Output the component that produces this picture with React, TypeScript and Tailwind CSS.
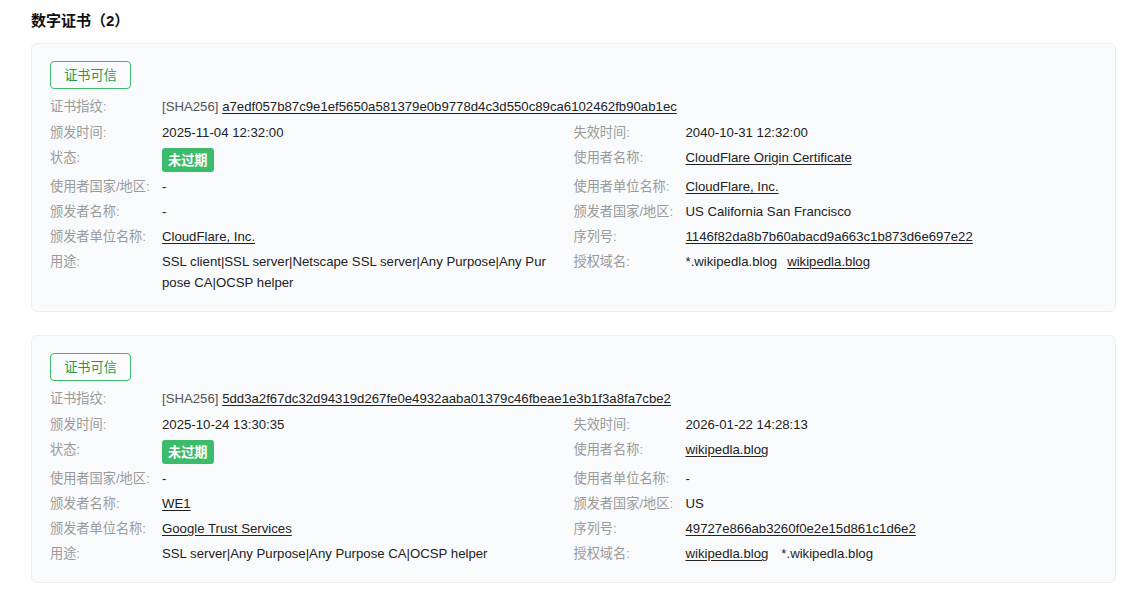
type Cell = { label: string; value: React.ReactNode };

interface Cert {
  fingerprint: string;
  left: Cell[];
  right: Cell[];
}

function Link({ children }: { children: React.ReactNode }) {
  return <span className="underline underline-offset-2 text-[#222]">{children}</span>;
}

function Expired() {
  return (
    <span className="mt-[1px] inline-flex h-[24px] items-center rounded-[3px] bg-[#3dbb6c] px-[6px] font-bold text-white">
      未过期
    </span>
  );
}

const certs: Cert[] = [
  {
    fingerprint: "a7edf057b87c9e1ef5650a581379e0b9778d4c3d550c89ca6102462fb90ab1ec",
    left: [
      { label: "颁发时间:", value: "2025-11-04 12:32:00" },
      { label: "状态:", value: <Expired /> },
      { label: "使用者国家/地区:", value: "-" },
      { label: "颁发者名称:", value: "-" },
      { label: "颁发者单位名称:", value: <Link>CloudFlare, Inc.</Link> },
      {
        label: "用途:",
        value: "SSL client|SSL server|Netscape SSL server|Any Purpose|Any Purpose CA|OCSP helper",
      },
    ],
    right: [
      { label: "失效时间:", value: "2040-10-31 12:32:00" },
      { label: "使用者名称:", value: <Link>CloudFlare Origin Certificate</Link> },
      { label: "使用者单位名称:", value: <Link>CloudFlare, Inc.</Link> },
      { label: "颁发者国家/地区:", value: "US California San Francisco" },
      { label: "序列号:", value: <Link>1146f82da8b7b60abacd9a663c1b873d6e697e22</Link> },
      {
        label: "授权域名:",
        value: (
          <span className="flex gap-[10px]">
            <span>*.wikipedla.blog</span>
            <Link>wikipedla.blog</Link>
          </span>
        ),
      },
    ],
  },
  {
    fingerprint: "5dd3a2f67dc32d94319d267fe0e4932aaba01379c46fbeae1e3b1f3a8fa7cbe2",
    left: [
      { label: "颁发时间:", value: "2025-10-24 13:30:35" },
      { label: "状态:", value: <Expired /> },
      { label: "使用者国家/地区:", value: "-" },
      { label: "颁发者名称:", value: <Link>WE1</Link> },
      { label: "颁发者单位名称:", value: <Link>Google Trust Services</Link> },
      { label: "用途:", value: "SSL server|Any Purpose|Any Purpose CA|OCSP helper" },
    ],
    right: [
      { label: "失效时间:", value: "2026-01-22 14:28:13" },
      { label: "使用者名称:", value: <Link>wikipedla.blog</Link> },
      { label: "使用者单位名称:", value: "-" },
      { label: "颁发者国家/地区:", value: "US" },
      { label: "序列号:", value: <Link>49727e866ab3260f0e2e15d861c1d6e2</Link> },
      {
        label: "授权域名:",
        value: (
          <span className="flex gap-[13px]">
            <Link>wikipedla.blog</Link>
            <span>*.wikipedla.blog</span>
          </span>
        ),
      },
    ],
  },
];

function Row({ cell }: { cell: Cell }) {
  return (
    <div className="flex items-start pr-[24px]">
      <div className="w-[112px] shrink-0 text-[#9a9a9a]">{cell.label}</div>
      <div className="min-w-0 flex-1 break-all text-[#222]">{cell.value}</div>
    </div>
  );
}

function CertCard({ cert }: { cert: Cert }) {
  return (
    <div className="rounded-[6px] border border-[#eceef1] bg-[#f9fafc] px-[18px] pt-[17px] pb-[18px]">
      <div className="inline-flex h-[28px] w-[81px] items-center justify-center rounded-[4px] border border-[#3dbd6c] text-[#1f9a4e]">
        证书可信
      </div>
      <div className="mt-[7px] flex items-start">
        <div className="w-[112px] shrink-0 text-[#9a9a9a]">证书指纹:</div>
        <div>
          <span className="text-[#555]">[SHA256] </span>
          <Link>{cert.fingerprint}</Link>
        </div>
      </div>
      <div className="mt-[5px] grid grid-cols-2 gap-y-[4px] items-start">
        {cert.left.map((c, i) => (
          <>
            <Row key={"l" + i} cell={c} />
            <Row key={"r" + i} cell={cert.right[i]} />
          </>
        ))}
      </div>
    </div>
  );
}

export default function App() {
  return (
    <div
      className="min-h-screen bg-white pl-[31px] pr-[14px] pt-[10px] text-[13.2px] leading-[21px]"
      style={{ fontFamily: '"Liberation Sans", "Noto Sans CJK SC", sans-serif' }}
    >
      <h2 className="mb-[12px] text-[15px] font-bold leading-[21px] text-[#111]">数字证书（2）</h2>
      <div className="flex flex-col gap-[23px]">
        {certs.map((c) => (
          <CertCard key={c.fingerprint} cert={c} />
        ))}
      </div>
    </div>
  );
}
